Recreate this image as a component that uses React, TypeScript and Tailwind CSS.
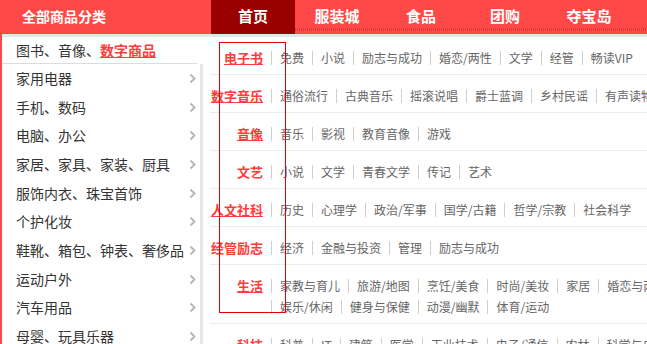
const font = "font-['SimSun','Noto_Sans_CJK_SC',sans-serif]";

const navItems = ["首页", "服装城", "食品", "团购", "夺宝岛"];

const sideItems = [
  "家用电器",
  "手机、数码",
  "电脑、办公",
  "家居、家具、家装、厨具",
  "服饰内衣、珠宝首饰",
  "个护化妆",
  "鞋靴、箱包、钟表、奢侈品",
  "运动户外",
  "汽车用品",
  "母婴、玩具乐器",
];

type Row = { title: string; underline: boolean; items: string[] };

const rows: Row[] = [
  { title: "电子书", underline: true, items: ["免费", "小说", "励志与成功", "婚恋/两性", "文学", "经管", "畅读VIP"] },
  { title: "数字音乐", underline: true, items: ["通俗流行", "古典音乐", "摇滚说唱", "爵士蓝调", "乡村民谣", "有声读物"] },
  { title: "音像", underline: true, items: ["音乐", "影视", "教育音像", "游戏"] },
  { title: "文艺", underline: false, items: ["小说", "文学", "青春文学", "传记", "艺术"] },
  { title: "人文社科", underline: true, items: ["历史", "心理学", "政治/军事", "国学/古籍", "哲学/宗教", "社会科学"] },
  { title: "经管励志", underline: false, items: ["经济", "金融与投资", "管理", "励志与成功"] },
  {
    title: "生活",
    underline: true,
    items: ["家教与育儿", "旅游/地图", "烹饪/美食", "时尚/美妆", "家居", "婚恋与两性", "娱乐/休闲", "健身与保健", "动漫/幽默", "体育/运动"],
  },
  { title: "科技", underline: true, items: ["科普", "IT", "建筑", "医学", "工业技术", "电子/通信", "农林", "科学与自然"] },
];

function Arrow() {
  return (
    <svg width="7" height="11" viewBox="0 0 7 11" className="shrink-0">
      <polyline points="1.5,1.5 5.5,5.5 1.5,9.5" fill="none" stroke="#b8b8b8" strokeWidth="2" />
    </svg>
  );
}

export default function App() {
  return (
    <div className={`relative w-[647px] h-[344px] overflow-hidden bg-white ${font}`}>
      {/* header */}
      <div className="flex h-[34px] bg-[#ff4848] text-white font-bold">
        <div className="w-[211px] shrink-0 pl-[22px] text-[14px] leading-[32px]">全部商品分类</div>
        <div className="flex flex-1 relative">
          {navItems.map((n, i) => (
            <div
              key={n}
              className={`relative z-10 w-[84px] text-center text-[15px] leading-[31px] ${i === 0 ? "bg-[#990000]" : ""}`}
            >
              {n}
            </div>
          ))}
          <div className="absolute left-0 right-0 bottom-[3px] h-[3px] bg-[repeating-linear-gradient(90deg,#e03434_0_1px,#ff5050_1px_2px)]" />
        </div>
      </div>

      {/* body */}
      <div className="flex">
        {/* sidebar */}
        <div className="w-[203px] shrink-0 border-l-2 border-[#ff4848]">
          <div className="border-t-[3px] border-[#e6e6e6]">
            <div className="h-[27px] pl-[14px] pr-[8px] leading-[27px] text-[14px] text-[#333] border-b border-[#dcdcdc] mr-[6px] whitespace-nowrap">
              图书、音像、<span className="font-bold text-[#ff3c3c] underline">数字商品</span>
            </div>
            <div className="border-r-[3px] border-[#e6e6e6]">
              {sideItems.map((s) => (
                <div
                  key={s}
                  className="h-[28.7px] flex items-center justify-between pl-[14px] pr-[4px] text-[14px] text-[#333] whitespace-nowrap"
                >
                  <span>{s}</span>
                  <Arrow />
                </div>
              ))}
            </div>
          </div>
        </div>

        {/* panel */}
        <div className="w-[500px] shrink-0 border-t-[3px] border-[#e6e6e6] pl-[7px]">
          {rows.map((r) => (
            <div key={r.title} className="flex border-b border-[#ececec] pt-[10px] pb-[6px] leading-[21px]">
              <div
                className={`w-[53px] shrink-0 text-right text-[13px] font-bold text-[#ff3c3c] whitespace-nowrap ${r.underline ? "underline" : ""}`}
              >
                {r.title}
              </div>
              <div className="flex flex-wrap flex-1">
                {r.items.map((it, j) => (
                  <div key={j} className="flex items-center whitespace-nowrap text-[12px] text-[#666]">
                    <span className="mx-[8px] w-px h-[14px] bg-[#cfcfcf]" />
                    <span>{it}</span>
                  </div>
                ))}
              </div>
            </div>
          ))}
        </div>
      </div>

      {/* annotation box */}
      <div className="absolute left-[219px] top-[42px] w-[67px] h-[271px] border border-[#e60000] pointer-events-none" />
    </div>
  );
}
